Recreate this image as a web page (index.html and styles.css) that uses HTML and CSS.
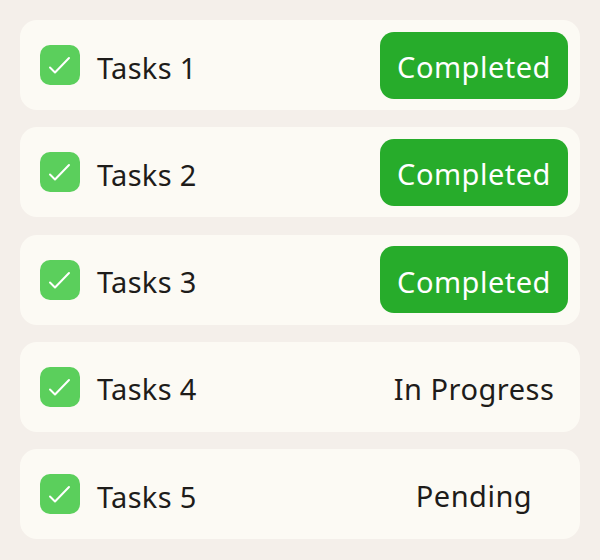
FILE: index.html
```
<!DOCTYPE html>
<html>
<head>
<meta charset="utf-8">
<link rel="stylesheet" href="styles.css">
</head>
<body>
<div class="list">
  <div class="card">
    <span class="check"><svg viewBox="0 0 40 40" width="40" height="40"><path d="M10 22.5 L15 27.5 L29 13" fill="none" stroke="#fff" stroke-width="2" stroke-linecap="round" stroke-linejoin="round"/></svg></span>
    <span class="name">Tasks 1</span>
    <span class="status done">Completed</span>
  </div>
  <div class="card">
    <span class="check"><svg viewBox="0 0 40 40" width="40" height="40"><path d="M10 22.5 L15 27.5 L29 13" fill="none" stroke="#fff" stroke-width="2" stroke-linecap="round" stroke-linejoin="round"/></svg></span>
    <span class="name">Tasks 2</span>
    <span class="status done">Completed</span>
  </div>
  <div class="card">
    <span class="check"><svg viewBox="0 0 40 40" width="40" height="40"><path d="M10 22.5 L15 27.5 L29 13" fill="none" stroke="#fff" stroke-width="2" stroke-linecap="round" stroke-linejoin="round"/></svg></span>
    <span class="name">Tasks 3</span>
    <span class="status done">Completed</span>
  </div>
  <div class="card">
    <span class="check"><svg viewBox="0 0 40 40" width="40" height="40"><path d="M10 22.5 L15 27.5 L29 13" fill="none" stroke="#fff" stroke-width="2" stroke-linecap="round" stroke-linejoin="round"/></svg></span>
    <span class="name">Tasks 4</span>
    <span class="status">In Progress</span>
  </div>
  <div class="card">
    <span class="check"><svg viewBox="0 0 40 40" width="40" height="40"><path d="M10 22.5 L15 27.5 L29 13" fill="none" stroke="#fff" stroke-width="2" stroke-linecap="round" stroke-linejoin="round"/></svg></span>
    <span class="name">Tasks 5</span>
    <span class="status">Pending</span>
  </div>
</div>
</body>
</html>
```
FILE: styles.css
```
html, body {
  margin: 0;
  padding: 0;
  background: #f4efea;
}
body {
  font-family: "Noto Sans", "Open Sans", sans-serif;
  color: #1e1c1a;
}
.list {
  display: flex;
  flex-direction: column;
  gap: 17.25px;
  padding: 20px;
}
.card {
  height: 90px;
  box-sizing: border-box;
  background: #fcfaf4;
  border-radius: 17px;
  display: flex;
  align-items: center;
  padding: 0 12px 0 20px;
}
.check {
  width: 40px;
  height: 40px;
  border-radius: 10px;
  background: #5bcf5c;
  display: flex;
  flex: none;
}
.name {
  margin-left: 17px;
  padding-top: 4px;
  font-size: 29px;
  letter-spacing: 0.3px;
  flex: 1;
}
.status {
  width: 188px;
  height: 67px;
  border-radius: 14px;
  display: flex;
  align-items: center;
  justify-content: center;
  padding-top: 3px;
  box-sizing: border-box;
  font-size: 29px;
  letter-spacing: 0.5px;
}
.status.done {
  background: #27ac2b;
  color: #fff;
}
```
